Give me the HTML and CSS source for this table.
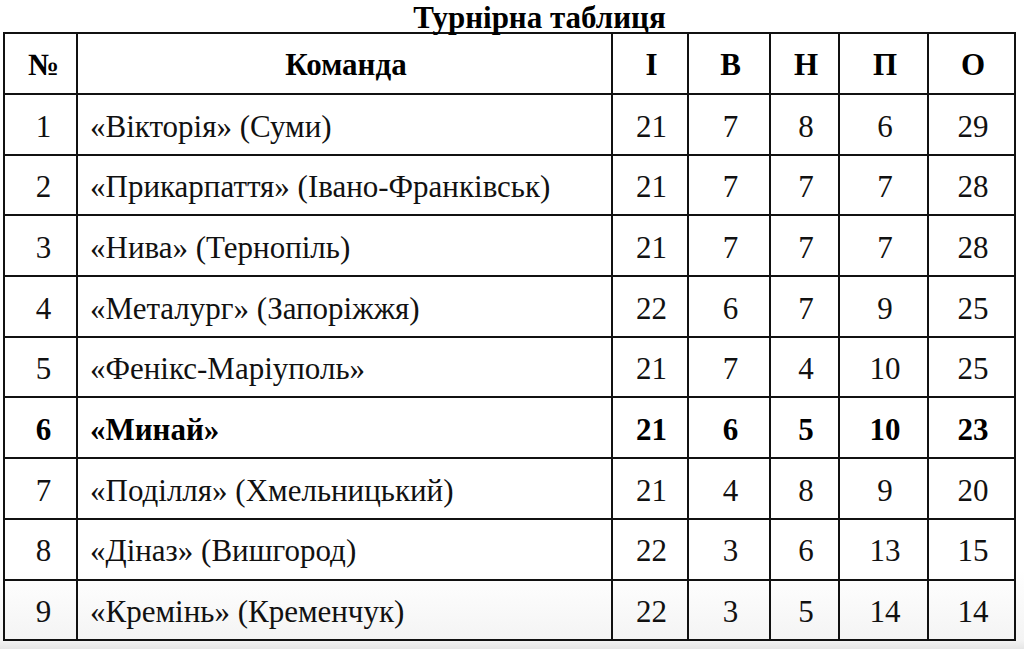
FILE: index.html
```html
<!DOCTYPE html>
<html lang="uk">
<head>
<meta charset="utf-8">
<title>Турнірна таблиця</title>
<link rel="stylesheet" href="styles.css">
</head>
<body>
<div class="page">
  <h1 class="title">Турнірна таблиця</h1>
  <table class="standings">
    <colgroup>
      <col class="c-num">
      <col class="c-team">
      <col class="c-i">
      <col class="c-v">
      <col class="c-n">
      <col class="c-p">
      <col class="c-o">
    </colgroup>
    <thead>
      <tr>
        <th class="num">№</th><th>Команда</th><th>І</th><th>В</th><th>Н</th><th>П</th><th>О</th>
      </tr>
    </thead>
    <tbody>
      <tr><td class="num">1</td><td class="team">«Вікторія» (Суми)</td><td>21</td><td>7</td><td>8</td><td>6</td><td>29</td></tr>
      <tr><td class="num">2</td><td class="team">«Прикарпаття» (Івано-Франківськ)</td><td>21</td><td>7</td><td>7</td><td>7</td><td>28</td></tr>
      <tr><td class="num">3</td><td class="team">«Нива» (Тернопіль)</td><td>21</td><td>7</td><td>7</td><td>7</td><td>28</td></tr>
      <tr><td class="num">4</td><td class="team">«Металург» (Запоріжжя)</td><td>22</td><td>6</td><td>7</td><td>9</td><td>25</td></tr>
      <tr><td class="num">5</td><td class="team">«Фенікс-Маріуполь»</td><td>21</td><td>7</td><td>4</td><td>10</td><td>25</td></tr>
      <tr class="own"><td class="num">6</td><td class="team">«Минай»</td><td>21</td><td>6</td><td>5</td><td>10</td><td>23</td></tr>
      <tr><td class="num">7</td><td class="team">«Поділля» (Хмельницький)</td><td>21</td><td>4</td><td>8</td><td>9</td><td>20</td></tr>
      <tr><td class="num">8</td><td class="team">«Діназ» (Вишгород)</td><td>22</td><td>3</td><td>6</td><td>13</td><td>15</td></tr>
      <tr><td class="num">9</td><td class="team">«Кремінь» (Кременчук)</td><td>22</td><td>3</td><td>5</td><td>14</td><td>14</td></tr>
    </tbody>
  </table>
</div>
</body>
</html>
```

FILE: styles.css
```css
html, body {
  margin: 0;
  padding: 0;
}
body {
  width: 1024px;
  height: 649px;
  overflow: hidden;
  background: linear-gradient(to bottom, #ffffff 0, #ffffff 570px, #f4f4f4 640px, #e6e6e6 649px);
  font-family: "Liberation Serif", "Times New Roman", serif;
  color: #111;
}
.page {
  padding: 0 0 0 3px;
}
.title {
  margin: 0;
  padding-left: 52px;
  text-align: center;
  font-size: 31px;
  font-weight: bold;
  line-height: 35px;
  height: 32px;
  color: #000;
}
.standings {
  border-collapse: collapse;
  width: 1011px;
  table-layout: fixed;
  font-size: 31px;
  border: 2px solid #000;
}
.c-num { width: 73px; }
.c-team { width: 535px; }
.c-i { width: 76px; }
.c-v { width: 82px; }
.c-n { width: 69px; }
.c-p { width: 89px; }
.c-o { width: 87px; }
.standings th,
.standings td {
  border: 2px solid #111;
  text-align: center;
  padding: 0 0 0 3px;
  font-weight: normal;
}
.standings th {
  font-weight: bold;
  height: 57px;
  padding-top: 2px;
  color: #000;
}
.standings td {
  height: 54.1px;
  padding-top: 4.6px;
}
.standings .num {
  padding-left: 6px;
}
.standings td.team {
  text-align: left;
  padding-left: 12px;
}
.standings tr.own td {
  font-weight: bold;
  color: #000;
}
```
